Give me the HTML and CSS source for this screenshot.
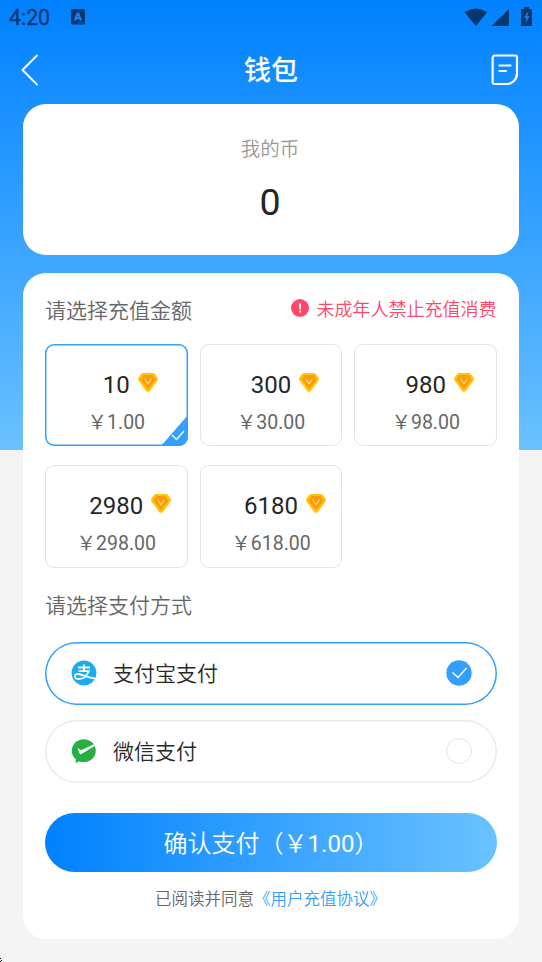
FILE: index.html
```html
<!DOCTYPE html>
<html lang="zh-CN">
<head>
<meta charset="utf-8">
<title>钱包</title>
<link rel="stylesheet" href="styles.css">
</head>
<body>
<svg class="defs" width="0" height="0">
  <symbol id="gem" viewBox="0 0 22 22">
    <path d="M6 1h10l5 5.500c.4 1.500 0 2.800-1 4L13 20c-1.300 1.200-2.700 1.200-4 0L2 10.500C1 9.300.6 8 1 6.500z" fill="#fff0cb"/>
    <path d="M6 1h10q1 0 1.600.8l3 3.800q.8 1.300-.1 2.600L12.800 18.800q-1.800 1.900-3.600 0L1.500 8.200q-.9-1.300-.1-2.600l3-3.800Q5 1 6 1z" fill="#ffc40a"/>
    <path d="M6.600 3h8.800L18.600 7.500 11 17.200 3.400 7.500z" fill="#ff9a05"/>
    <path d="M7.500 6.500L11 12l3.500-5.500" fill="none" stroke="#ffe08a" stroke-width="1.200"/>
  </symbol>
</svg>
<div class="screen">
  <div class="status">
    <span class="time">4:20</span>
    <svg class="app-icon" width="14" height="16" viewBox="0 0 14 16">
      <rect width="14" height="15.600" rx="1" fill="#05386f"/>
      <path d="M3.800 11.500L6.400 4.700h1L10 11.500M4.800 9.300h4.400" fill="none" stroke="#1a86f5" stroke-width="2"/>
      <path d="M7 13.800h6" stroke="#1a6cc0" stroke-width="1.200" stroke-dasharray="1 .5"/>
    </svg>
    <svg class="signals" width="70" height="20" viewBox="0 0 70 20">
      <g fill="#05386f">
        <path d="M.5 5.200Q11.800-2.200 23.200 5.200L11.800 19z"/>
        <path d="M27.500 19L45 2v17z"/>
        <path d="M57 2h3V0h5v2h3v17H57z"/>
      </g>
      <path d="M63.500 5L60 11h2.300l-1 5.300L65.700 9h-2.500L64.500 5z" fill="#1680f0"/>
    </svg>
  </div>
  <header class="nav">
    <svg width="18" height="32" viewBox="0 0 18 32"><path d="M16 1.500L1.500 16 16 30.500" fill="none" stroke="#fff" stroke-width="1.900" stroke-linecap="round" stroke-linejoin="round"/></svg>
    <h1>钱包</h1>
    <svg width="28" height="32" viewBox="0 0 28 32"><path d="M4 1.500h20a2 2 0 0 1 2 2V19.500a10.500 10.500 0 0 1-10.500 10.500H3.600a2 2 0 0 1-2-2V3.900A2.400 2.400 0 0 1 4 1.500zM8.500 11.500h11M8.500 17h6.500" fill="none" stroke="#fff" stroke-width="2.200" stroke-linecap="round"/></svg>
  </header>
  <section class="balance card">
    <div class="label">我的币</div>
    <div class="coins">0</div>
  </section>
  <main class="card recharge">
    <div class="head">
      <h2>请选择充值金额</h2>
      <div class="warn">
        <svg width="18" height="18" viewBox="0 0 18 18"><circle cx="9" cy="9" r="9" fill="#ff4769"/><path d="M7.900 4.200h2.200l-.4 6.300H8.300z" fill="#fff"/><circle cx="9" cy="12.700" r="1.100" fill="#fff"/></svg>
        <span>未成年人禁止充值消费</span>
      </div>
    </div>
    <div class="amounts">
      <div class="amount selected">
        <div class="qty"><b>10</b><svg class="gem"><use href="#gem"/></svg></div><div class="price">&#xFFE5;1.00</div>
        <svg class="corner" width="27" height="31" viewBox="0 0 27 31"><path d="M27 0v31H0z" fill="#339fff"/><path d="M11 20l4.500 4.500L23 16" fill="none" stroke="#fff" stroke-width="1.300"/></svg>
      </div>
      <div class="amount"><div class="qty"><b>300</b><svg class="gem"><use href="#gem"/></svg></div><div class="price">&#xFFE5;30.00</div></div>
      <div class="amount"><div class="qty"><b>980</b><svg class="gem"><use href="#gem"/></svg></div><div class="price">&#xFFE5;98.00</div></div>
      <div class="amount"><div class="qty"><b>2980</b><svg class="gem"><use href="#gem"/></svg></div><div class="price">&#xFFE5;298.00</div></div>
      <div class="amount"><div class="qty"><b>6180</b><svg class="gem"><use href="#gem"/></svg></div><div class="price">&#xFFE5;618.00</div></div>
    </div>
    <h2 class="method-title">请选择支付方式</h2>
    <div class="method selected">
      <svg width="26" height="26" viewBox="0 0 26 26"><circle cx="13" cy="13" r="12.400" fill="#1badeb"/><path d="M7 7.500h12M13 4.500v6.500M7.500 11.200h10.200C16 15.800 12.500 19 8 19c-3.200 0-4.300-1.300-4.300-2.700 0-1.600 1.700-2.600 4-2.300 3.200.4 7.500 3.200 16.500 4.700" fill="none" stroke="#fff" stroke-width="1.800"/></svg>
      <span>支付宝支付</span>
      <svg width="26" height="26" viewBox="0 0 26 26"><circle cx="13" cy="13" r="12.700" fill="#339fff"/><path d="M6.500 12.500l5.500 5L20.500 8" fill="none" stroke="#fff" stroke-width="1.400"/></svg>
    </div>
    <div class="method">
      <svg width="26" height="26" viewBox="0 0 26 26"><path d="M12.800 1.300c6.700 0 12 5 12 11.400s-5.300 11.400-12 11.400c-1.900 0-3.200-.3-4.700-.9L4.700 25.300l.2-4C2.300 19.200.8 16.300.8 12.700.8 6.300 6 1.300 12.800 1.300z" fill="#25b041"/><path d="M6.700 10.100l3.400 2.200L22.800 6.300l.9 1.700L10 16.200q-1 .4-1.500-.6z" fill="#fff"/></svg>
      <span>微信支付</span>
      <i class="radio"></i>
    </div>
    <button class="pay">确认支付（&#xFFE5;<b>1.00</b>）</button>
    <p class="agree">已阅读并同意<a>《用户充值协议》</a></p>
  </main>
  <svg class="edge" width="3" height="4" viewBox="0 0 3 4"><path d="M0 0h1v1H0zM1 2h1v1H1zM0 2v1h1v1H0z" fill="#000"/></svg>
</div>
</body>
</html>
```
FILE: styles.css
```css
* { box-sizing: border-box; margin: 0; padding: 0; }
body { font-family: Roboto, "Noto Sans CJK SC", sans-serif; color: #262626; }
svg { display: block; flex: none; }
.defs { position: absolute; }
.screen {
  position: relative;
  width: 542px; height: 962px; padding: 0 23px; overflow: hidden;
  background: linear-gradient(#0081ff, #6ac1ff) 0 0 / 100% 450px no-repeat #f4f4f4;
}
.status { display: flex; height: 36px; margin: 0 -14px; align-items: flex-start; }
.time { width: 62px; font-size: 21.300px; line-height: 25px; padding-top: 5px; color: #05386f; -webkit-text-stroke: .3px #05386f; }
.app-icon { margin-top: 9px; }
.signals { margin: 7px -1px 0 auto; }
.nav { display: flex; justify-content: space-between; align-items: center; height: 68px; }
.nav svg:first-child { margin-left: -2px; margin-right: 12px; }
h1 { color: #fff; font-size: 27px; line-height: 40px; font-weight: 500; margin-top: 2px; }
.card { background: #fff; border-radius: 23px; }
.balance { height: 151px; padding-top: 31px; text-align: center; }
.label { color: #999; font-size: 19.500px; line-height: 30px; font-weight: 350; margin-left: -2px; }
.coins { font-size: 37.500px; line-height: 44px; margin-top: 15px; margin-left: -2px; }
.recharge { height: 666px; margin-top: 18px; padding: 0 22px; }
.head { display: flex; justify-content: space-between; height: 70.500px; }
h2 { color: #666; font-weight: 350; font-size: 21px; line-height: 30px; }
.head h2 { margin-top: 23px; }
.warn { display: flex; align-items: center; gap: 8px; height: 30px; margin: 19.500px .5px 0 0; color: #ff4769; font-size: 18px; font-weight: 350; }
.amounts { display: grid; grid-template-columns: repeat(3, 1fr); gap: 19px 12px; }
.amount { position: relative; height: 102.500px; box-shadow: inset 0 0 0 1px #e4e4e4; border-radius: 9px; overflow: hidden; text-align: center; padding-top: 26px; }
.amount.selected { box-shadow: inset 0 0 0 1.500px #339fff; }
.qty { display: grid; grid-template-columns: 1fr auto 1fr; height: 30px; }
.qty b { grid-column: 2; font-size: 24px; line-height: 30px; font-weight: 400; }
.gem { width: 22px; height: 22px; margin: 2px 0 0 7px; }
.price { color: #666; font-size: 19.500px; line-height: 28px; margin-top: 9px; }
.corner { position: absolute; right: 0; bottom: 0; }
.method-title { margin: 23px 0 21px; }
.method { display: flex; align-items: center; height: 63px; padding: 0 25px 0 26px; box-shadow: inset 0 0 0 1.500px #ebebeb; border-radius: 32px; font-size: 21px; font-weight: 350; margin-bottom: 15px; }
.method.selected { box-shadow: inset 0 0 0 1.500px #339fff; }
.method span { flex: 1; margin: -2px 0 0 16px; }
.radio { width: 26px; height: 26px; border: 1px solid #e2e2e2; border-radius: 50%; }
.pay { display: block; width: 452px; height: 59px; margin-top: 30px; padding-top: 1px; border: 0; border-radius: 30px; background: linear-gradient(90deg, #0081ff, #6ac2ff); color: #fff; font: 350 24px/61px Roboto, "Noto Sans CJK SC", sans-serif; }
.pay b { font-weight: 400; }
.agree { margin: 14px 0 0 -1px; text-align: center; color: #666; font-size: 16.500px; line-height: 27px; font-weight: 350; }
.agree a { color: #339fff; }
.edge { position: absolute; left: 0; bottom: 0; }
```
